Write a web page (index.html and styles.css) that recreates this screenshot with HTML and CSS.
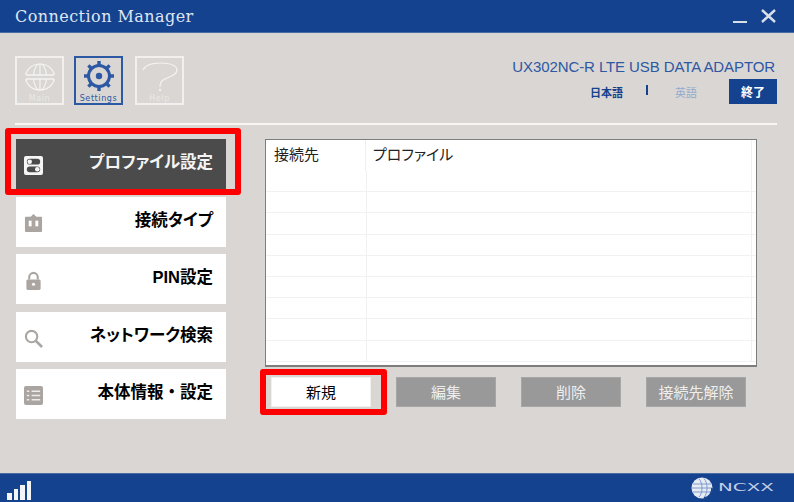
FILE: index.html
```html
<!DOCTYPE html>
<html lang="ja">
<head>
<meta charset="utf-8">
<title>Connection Manager</title>
<link rel="stylesheet" href="styles.css">
</head>
<body>
<div class="app">
  <header class="titlebar">
    <div class="app-title">Connection Manager</div>
    <div class="win-controls">
      <span class="win-min"></span>
      <svg class="win-close" width="15" height="14" viewBox="0 0 15 14"><path d="M1 1 14 13M14 1 1 13" stroke="#d9dfe9" stroke-width="2.400" fill="none"/></svg>
    </div>
  </header>

  <section class="top">
    <div class="tabs">
      <div class="tab">
        <svg class="globe" width="30" height="28" viewBox="0 0 30 28" fill="none" stroke="#f4f3f2" stroke-width="1.200"><ellipse cx="15" cy="14" rx="14.400" ry="13"/><ellipse cx="15" cy="14" rx="6.500" ry="13"/><path d="M15 1V27"/><rect x="0" y="12" width="30" height="4" fill="#d9d6d3" stroke="none"/><path d="M1 12H29M1 16H29" stroke-width="1.500"/></svg>
        <span class="tab-label">Main</span>
      </div>
      <div class="tab active">
        <svg width="32" height="32" viewBox="0 0 32 32" fill="none"><circle cx="16" cy="16" r="10.500" stroke="#2d58a4" stroke-width="3"/><circle cx="16" cy="16" r="3.200" fill="#2d58a4"/><path d="M16 1V6M16 26V31M1 16H6M26 16H31M5.400 5.400 9 9M23 23 26.600 26.600M26.600 5.400 23 9M9 23 5.400 26.600" stroke="#2d58a4" stroke-width="3.400"/></svg>
        <span class="tab-label">Settings</span>
      </div>
      <div class="tab">
        <svg width="38" height="32" viewBox="0 0 38 32" fill="none" stroke="#f4f3f2" stroke-width="1.200"><path d="M2 10C4 5 12 3 20 3 30 3 36 6 36 10 36 16 26 17 22 20 20 21.500 19 23 19 27"/><path d="M19 29V31" stroke-width="2"/></svg>
        <span class="tab-label">Help</span>
      </div>
    </div>
    <div class="device">
      <div class="device-name">UX302NC-R LTE USB DATA ADAPTOR</div>
      <div class="lang-row">
        <span class="lang current">日本語</span>
        <span class="lang-sep"></span>
        <span class="lang other">英語</span>
        <span class="quit">終了</span>
      </div>
    </div>
  </section>

  <div class="divider"></div>

  <main class="content">
    <nav class="menu">
      <div class="menu-item selected">
        <svg class="menu-icon" width="19" height="19" viewBox="0 0 20 20"><rect width="20" height="20" rx="2" fill="#f5f5f5"/><rect x="3" y="3" width="14" height="6" rx="3" fill="#4b4b4b"/><circle cx="6" cy="6" r="2.400" fill="#f5f5f5"/><rect x="3" y="11" width="14" height="6" rx="3" fill="#4b4b4b"/><circle cx="14" cy="14" r="2.400" fill="#f5f5f5"/></svg>
        <span>プロファイル設定</span>
      </div>
      <div class="menu-item">
        <svg class="menu-icon" width="19" height="19" viewBox="0 0 20 20"><path d="M2 3H7L10 0 13 3H18Q19 3 19 4V18Q19 19 18 19H2Q1 19 1 18V4Q1 3 2 3Z" fill="#aaa5a1"/><rect x="5" y="7" width="3" height="6" fill="#fff"/><rect x="12" y="7" width="3" height="6" fill="#fff"/></svg>
        <span>接続タイプ</span>
      </div>
      <div class="menu-item">
        <svg class="menu-icon" width="19" height="19" viewBox="0 0 20 20"><path d="M5.500 9V6.500a4.500 4.500 0 0 1 9 0V9" fill="none" stroke="#aaa5a1" stroke-width="2.200"/><rect x="2.500" y="9" width="15" height="11" rx="1.500" fill="#aaa5a1"/><circle cx="10" cy="14" r="1.600" fill="#fff"/></svg>
        <span>PIN設定</span>
      </div>
      <div class="menu-item">
        <svg class="menu-icon" width="19" height="19" viewBox="0 0 20 20"><circle cx="8" cy="8" r="6" fill="none" stroke="#aaa5a1" stroke-width="2.200"/><path d="M12.500 12.500 19 19" stroke="#aaa5a1" stroke-width="2.800"/></svg>
        <span>ネットワーク検索</span>
      </div>
      <div class="menu-item full-width">
        <svg class="menu-icon" width="19" height="19" viewBox="0 0 20 20"><rect width="20" height="20" rx="2" fill="#aaa5a1"/><path d="M3 5.500H5.500M8 5.500H17M3 10H5.500M8 10H17M3 14.500H5.500M8 14.500H17" stroke="#eeecea" stroke-width="1.500"/></svg>
        <span>本体情報・設定</span>
      </div>
    </nav>

    <div class="panel">
      <div class="table">
        <div class="thead">
          <div class="col-a">接続先</div>
          <div class="col-b">プロファイル</div>
          <div class="col-c"></div>
        </div>
        <div class="tbody">
          <div class="row"><span class="cell-a"></span><span class="cell-b"></span></div>
          <div class="row"><span class="cell-a"></span><span class="cell-b"></span></div>
          <div class="row"><span class="cell-a"></span><span class="cell-b"></span></div>
          <div class="row"><span class="cell-a"></span><span class="cell-b"></span></div>
          <div class="row"><span class="cell-a"></span><span class="cell-b"></span></div>
          <div class="row"><span class="cell-a"></span><span class="cell-b"></span></div>
          <div class="row"><span class="cell-a"></span><span class="cell-b"></span></div>
          <div class="row"><span class="cell-a"></span><span class="cell-b"></span></div>
          <div class="row"><span class="cell-a"></span><span class="cell-b"></span></div>
        </div>
      </div>
      <div class="actions">
        <div class="btn primary">新規</div>
        <div class="btn">編集</div>
        <div class="btn">削除</div>
        <div class="btn">接続先解除</div>
      </div>
    </div>
  </main>

  <footer class="statusbar">
    <div class="signal"><i class="b1"></i><i class="b2"></i><i class="b3"></i><i class="b4"></i></div>
    <div class="brand">
      <svg width="22" height="22" viewBox="0 0 22 22"><circle cx="11" cy="11" r="10.500" fill="#e6ebf4"/><path d="M8 2C12 6 12 16 8 20M13 1.500C17 6 17 16 13 20.500M2 7H20M1 11H21M2 15H20" stroke="#7f9bca" stroke-width="1" fill="none"/><path d="M13 21C18 20 21 16 21 11" stroke="#14428f" stroke-width="1.500" fill="none"/></svg>
      <span class="brand-name">NCXX</span>
    </div>
  </footer>
</div>
</body>
</html>
```
FILE: styles.css
```css
* { box-sizing: border-box; }
html, body { margin: 0; padding: 0; }
body {
  width: 794px;
  height: 502px;
  overflow: hidden;
  background: #d9d6d3;
  font-family: "Liberation Sans", "Noto Sans CJK JP", sans-serif;
}
.app {
  width: 794px;
  height: 502px;
  display: flex;
  flex-direction: column;
  position: relative;
}
.titlebar {
  height: 33px;
  flex: none;
  background: #14428f;
  border-bottom: 1px solid #4a6ca6;
  display: flex;
  align-items: center;
  justify-content: space-between;
  padding: 0 18px 0 15px;
}
.app-title {
  font-family: "DejaVu Serif", serif;
  font-size: 16px;
  letter-spacing: 0.45px;
  color: #dfe6f2;
}
.win-controls { display: flex; align-items: flex-end; gap: 14px; }
.win-min { width: 14px; height: 2px; background: #d9dfe9; }
.top {
  height: 90px;
  flex: none;
  display: flex;
  justify-content: space-between;
  padding: 23px 17px 0 15px;
}
.tabs { display: flex; gap: 10px; }
.tab {
  width: 49px;
  height: 49px;
  border: 2px solid #f1f0ee;
  display: flex;
  flex-direction: column;
  align-items: center;
  padding-top: 2px;
  position: relative;
}
.tab + .tab + .tab { margin-left: 2px; }
.tab.active { border-color: #2d58a4; }
.tab svg { flex: none; }
.tab .globe { margin-top: 3px; }
.tab-label {
  position: absolute;
  left: 0;
  right: 0;
  bottom: 0;
  text-align: center;
  font-family: "DejaVu Sans", sans-serif;
  font-size: 8px;
  letter-spacing: 0.6px;
  line-height: 9px;
  color: #ebe9e7;
}
.tab.active .tab-label { color: #2d58a4; }
.device {
  display: flex;
  flex-direction: column;
  align-items: flex-end;
}
.device-name {
  font-size: 15px;
  letter-spacing: -0.1px;
  line-height: 16px;
  margin: 3px 2px 0 0;
  color: #2d58a4;
}
.lang-row {
  display: flex;
  align-items: center;
  margin-top: 4px;
}
.lang { font-size: 11px; font-weight: 700; line-height: 12px; margin-top: 2px; }
.lang.current { color: #14428f; }
.lang.other { color: #93aace; font-weight: 400; }
.lang-sep { width: 2px; height: 10px; background: #14428f; margin: 0 27px 4px 23px; }
.quit {
  width: 48px;
  height: 25px;
  margin-left: 32px;
  background: #14428f;
  color: #fff;
  font-size: 12px;
  font-weight: 700;
  display: flex;
  align-items: center;
  justify-content: center;
}
.divider {
  height: 2px;
  flex: none;
  margin: 0 17px 0 15px;
  background: #f7f6f5;
}
.content {
  flex: 1;
  display: flex;
  padding: 14px 36px 0 16px;
  gap: 39px;
}
.menu {
  width: 210px;
  flex: none;
  display: flex;
  flex-direction: column;
  gap: 7.500px;
}
.menu-item {
  height: 50px;
  background: #fff;
  display: flex;
  align-items: center;
  justify-content: space-between;
  padding: 0 13px 4px 8px;
  color: #000;
  font-size: 16.500px;
  font-weight: 700;
  font-feature-settings: "palt";
  line-height: 20px;
}
.menu-item.full-width { font-feature-settings: normal; }
.menu-icon { flex: none; margin-top: 7px; }
.menu-item.selected {
  background: #4b4b4b;
  color: #f4f4f4;
  position: relative;
}
.menu-item.selected::after {
  content: "";
  position: absolute;
  left: -11px;
  right: -15px;
  top: -11px;
  bottom: -6px;
  border: 6px solid #fe0000;
  border-radius: 3px;
}
.panel {
  width: 492px;
  flex: none;
  display: flex;
  flex-direction: column;
}
.table {
  height: 228px;
  background: #fff;
  border: 1px solid #7d7d7d;
  border-bottom-width: 2px;
  overflow: hidden;
  display: flex;
  flex-direction: column;
}
.thead {
  height: 31px;
  flex: none;
  display: flex;
  font-size: 15px;
  font-feature-settings: "palt";
  line-height: 30px;
  color: #222;
}
.col-a { width: 100px; padding-left: 8px; border-right: 1px solid #eeeeee; }
.col-b { flex: 1; padding-left: 7px; }
.col-c { width: 5px; border-left: 1px solid #f1f1f1; }
.tbody { flex: 1; }
.row {
  height: 21.200px;
  display: flex;
  border-bottom: 1px solid #f1f1f1;
}
.cell-a { width: 101px; border-right: 1px solid #f1f1f1; }
.cell-b { flex: 1; border-right: 1px solid #f1f1f1; margin-right: 4px; }
.actions {
  display: flex;
  gap: 25px;
  padding: 10px 0 0 6px;
}
.btn {
  width: 100px;
  height: 30px;
  background: #999999;
  border: 1px solid #a6a6a6;
  color: #eeeeee;
  font-size: 15px;
  padding-bottom: 2px;
  display: flex;
  align-items: center;
  justify-content: center;
}
.btn.primary {
  background: #fff;
  border-color: #f0f0f0;
  color: #000;
  position: relative;
}
.btn.primary::after {
  content: "";
  position: absolute;
  left: -12px;
  right: -17px;
  top: -9px;
  bottom: -9px;
  border: 6px solid #fe0000;
  border-radius: 3px;
}
.statusbar {
  height: 29px;
  flex: none;
  background: #14428f;
  border-top: 1px solid #4a6ca6;
  display: flex;
  align-items: center;
  justify-content: space-between;
  padding: 0 22px 0 7px;
}
.signal { display: flex; align-items: flex-end; gap: 2px; height: 20px; margin-top: 4px; }
.signal i { display: block; width: 4.500px; flex: none; background: #f2f4f8; }
.signal .b1 { height: 7px; }
.signal .b2 { height: 11px; }
.signal .b3 { height: 15px; }
.signal .b4 { height: 19px; }
.brand { display: flex; align-items: center; gap: 5px; }
.brand-name {
  font-family: "DejaVu Sans", sans-serif;
  font-size: 11px;
  line-height: 12px;
  width: 54px;
  transform: scaleX(1.800);
  transform-origin: left center;
  color: #c3d0e6;
}
```
